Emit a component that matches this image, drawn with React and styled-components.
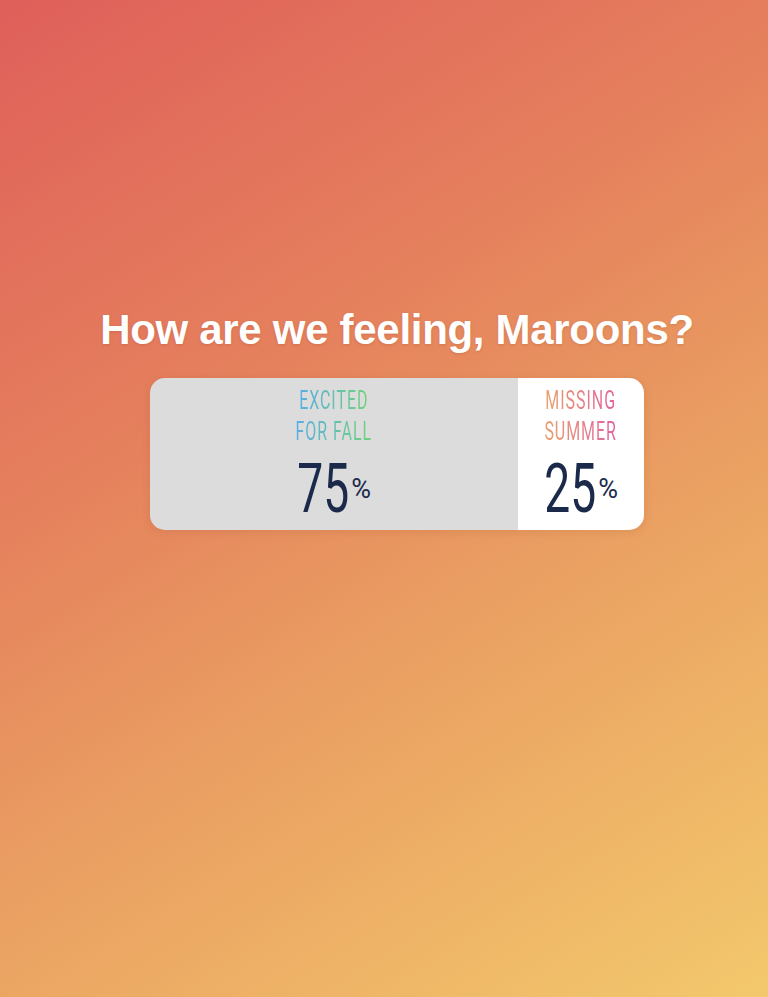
import React from "react";
import styled, { createGlobalStyle } from "styled-components";

const GlobalStyle = createGlobalStyle`
  html, body {
    margin: 0;
    padding: 0;
  }
  body {
    font-family: "Liberation Sans", Arial, sans-serif;
  }
`;

const Page = styled.div`
  min-height: 100vh;
  box-sizing: border-box;
  padding: 306px 0 0 26px;
  display: flex;
  flex-direction: column;
  align-items: center;
  background: linear-gradient(
    148deg,
    #df5f5a 0%,
    #e5805d 35%,
    #eaa062 62%,
    #f3c86c 100%
  );
`;

const Question = styled.h1`
  margin: 0;
  color: #fff;
  font-family: "Liberation Sans", Arial, sans-serif;
  font-weight: 700;
  font-size: 42px;
  line-height: 48px;
  letter-spacing: -0.3px;
  text-shadow: 0 1px 3px rgba(120, 40, 20, 0.18);
`;

const Poll = styled.div`
  margin-top: 24px;
  width: 494px;
  height: 152px;
  display: flex;
  border-radius: 15px;
  overflow: hidden;
  box-shadow: 0 2px 10px rgba(120, 50, 20, 0.12);
`;

const Option = styled.div`
  flex: 0 0 ${(p) => p.$width}px;
  background: ${(p) => p.$bg};
  display: flex;
  flex-direction: column;
  align-items: center;
  padding-top: 7px;
  box-sizing: border-box;
`;

const Label = styled.div`
  display: flex;
  flex-direction: column;
  align-items: center;
  font-family: Roboto, "Liberation Sans", sans-serif;
  font-weight: 400;
  font-size: 25px;
  line-height: 31px;
  letter-spacing: 1.5px;
  transform: scaleX(0.64);
`;

const LabelLine = styled.span`
  background: linear-gradient(90deg, ${(p) => p.$from}, ${(p) => p.$to});
  -webkit-background-clip: text;
  background-clip: text;
  color: transparent;
  white-space: nowrap;
`;

const Result = styled.div`
  margin-top: 8px;
  display: flex;
  align-items: baseline;
  color: #1b2a4a;
  font-family: Roboto, "Liberation Sans", sans-serif;
`;

const Number = styled.span`
  display: inline-block;
  font-size: 68px;
  line-height: 68px;
  font-weight: 400;
  transform: scaleX(0.68);
  margin: 0 -12px;
`;

const Percent = styled.span`
  display: inline-block;
  font-size: 27px;
  font-weight: 400;
  margin-left: 2px;
  position: relative;
  top: -14px;
`;

const options = [
  {
    lines: ["EXCITED", "FOR FALL"],
    from: "#58aee4",
    to: "#6fd27a",
    value: 75,
    width: 368,
    bg: "#dcdcdc",
  },
  {
    lines: ["MISSING", "SUMMER"],
    from: "#e9a06a",
    to: "#e2619f",
    value: 25,
    width: 126,
    bg: "#ffffff",
  },
];

export default function App() {
  return (
    <>
      <GlobalStyle />
      <Page>
        <Question>How are we feeling, Maroons?</Question>
        <Poll>
          {options.map((o) => (
            <Option key={o.value} $width={o.width} $bg={o.bg}>
              <Label>
                {o.lines.map((line) => (
                  <LabelLine key={line} $from={o.from} $to={o.to}>
                    {line}
                  </LabelLine>
                ))}
              </Label>
              <Result>
                <Number>{o.value}</Number>
                <Percent>%</Percent>
              </Result>
            </Option>
          ))}
        </Poll>
      </Page>
    </>
  );
}
